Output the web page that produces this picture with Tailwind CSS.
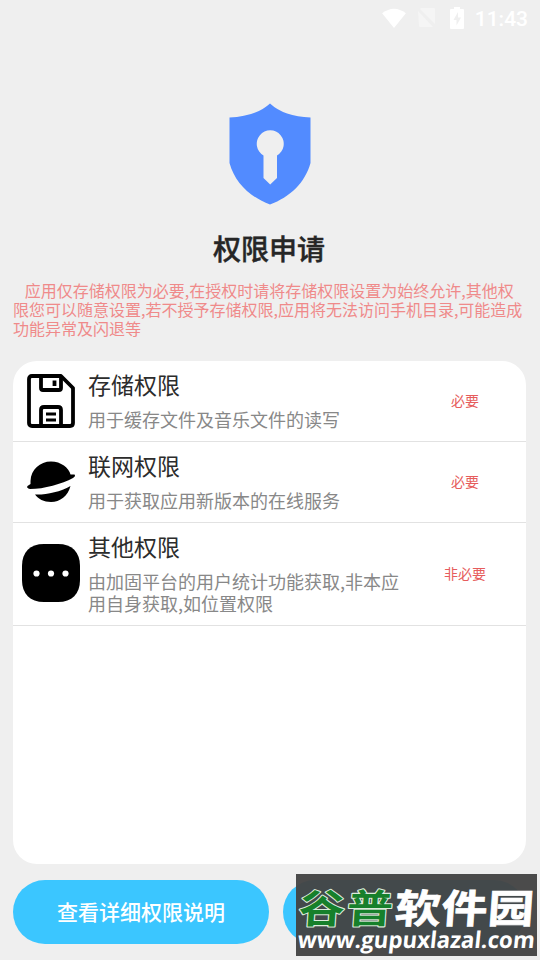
<!DOCTYPE html>
<html lang="zh-CN">
<head>
<meta charset="utf-8">
<title>权限申请</title>
<script src="https://cdn.jsdelivr.net/npm/@tailwindcss/browser@4"></script>
</head>
<body class="bg-[#efefef] font-['Noto_Sans_CJK_SC',sans-serif]">
<div class="relative w-[540px] h-[960px] overflow-hidden flex flex-col bg-[#efefef]">
  <header class="h-[35px] shrink-0 flex items-center justify-end pr-3 text-white">
    <svg class="w-[26px] h-5 mr-[11px]" viewBox="0 0 26 21"><path d="M0.500 5.500Q13-4 25.500 5.500L13 21Z" fill="currentColor"/></svg>
    <svg class="w-[18px] h-5 mr-3.5" viewBox="0 0 18 20"><path d="M3 0H16Q17 0 17 1V16L2 1Z M0 3L15 19H2Q1 19 1 18Z" fill="#f5f5f5"/></svg>
    <svg class="w-3.5 h-[22px] mr-[11px]" viewBox="0 0 14 22"><path d="M4 0H10V2H13Q14 2 14 3V21Q14 22 13 22H1Q0 22 0 21V3Q0 2 1 2H4Z" fill="currentColor"/><path d="M8 5L3.500 13H6.500V18.500L11 10.500H8Z" fill="#efefef"/></svg>
    <span class="font-[Roboto,sans-serif] font-medium text-[21px] leading-none pt-[3px]">11:43</span>
  </header>

  <section class="shrink-0 h-[326px] flex flex-col items-center pt-[68px]">
    <svg class="w-[82px] h-[102px]" viewBox="0 0 82 102"><path d="M41 0.500Q55 13.500 81.500 14.500V60C76 80 61 94 41 101.500C21 94 6 80 0.500 60V14.500Q27 13.500 41 0.500Z" fill="#528bff"/><path d="M34.500 52.500A13.500 13.500 0 1 1 48 52.500V75L41.200 81.500L34.500 75Z" fill="#efefef"/></svg>
    <h1 class="mt-[23px] mr-0.5 h-10 text-[28px] leading-10 font-medium [-webkit-text-stroke:0.4px] text-[#262626]">权限申请</h1>
    <p class="w-full mt-[13px] pl-[13px] text-base leading-[19px] text-[#ef8a8a] whitespace-pre"><span class="pl-px">   </span>应用仅存储权限为必要,在授权时请将存储权限设置为始终允许,其他权
限您可以随意设置,若不授予存储权限,应用将无法访问手机目录,可能造成
功能异常及闪退等</p>
  </section>

  <main class="shrink-0 mx-[13px] w-[513px] h-[503px] bg-white rounded-[24px] overflow-hidden">
    <article class="h-[81px] flex border-b border-[#e2e2e2]">
      <div class="w-[75px] pb-px flex items-center justify-center">
        <svg class="w-12 h-[54px]" viewBox="0 0 48 54" fill="none" stroke="#000" stroke-width="3.800" stroke-linejoin="round"><path d="M5 2H34L46 14V49Q46 52 43 52H5Q2 52 2 49V5Q2 2 5 2Z"/><path d="M14 2V14Q14 16 16 16H32Q34 16 34 14V2M14 52V36Q14 33 17 33H31Q34 33 34 36V52"/><path d="M19 40H29M19 46H29" stroke-width="3.200"/><path d="M27.500 6.500V12"/></svg>
      </div>
      <div class="w-[316px] pt-1.5">
        <h2 class="text-[23px] leading-[35px] text-[#2c2c2c]">存储权限</h2>
        <p class="mt-1.5 text-lg leading-[22px] text-[#888]">用于缓存文件及音乐文件的读写</p>
      </div>
      <div class="flex-1 pb-0.5 flex items-center justify-center text-sm text-[#e65c5c]">必要</div>
    </article>
    <article class="h-[81px] flex border-b border-[#e2e2e2]">
      <div class="w-[75px] pb-px flex items-center justify-center">
        <svg class="w-12 h-[42px] overflow-visible" viewBox="0 0 48 42"><path d="M3.500 20C4 8.500 13 0.500 24 0.500C34 0.500 42 7 43.500 13.500L47.500 13.500Q49 15 46 17C35 23 17 28 3 28Q-1 27 0.500 25L3.500 23Z M8 33.500C19 34 33 31 43.500 25C41 35 33 41 24 41C17 41 11 38 8 33.500Z"/></svg>
      </div>
      <div class="w-[316px] pt-1.5">
        <h2 class="text-[23px] leading-[35px] text-[#2c2c2c]">联网权限</h2>
        <p class="mt-1.5 text-lg leading-[22px] text-[#888]">用于获取应用新版本的在线服务</p>
      </div>
      <div class="flex-1 pb-0.5 flex items-center justify-center text-sm text-[#e65c5c]">必要</div>
    </article>
    <article class="h-[103px] flex border-b border-[#e2e2e2]">
      <div class="w-[75px] pb-0.5 flex items-center justify-center">
        <svg class="w-[58px] h-[58px]" viewBox="0 0 58 58"><path d="M22 0H36C50 0 58 8 58 22V36C58 50 50 58 36 58H22C8 58 0 50 0 36V22C0 8 8 0 22 0Z"/><g fill="#fff"><circle cx="14.500" cy="29.500" r="3.100"/><circle cx="29" cy="29.500" r="3.100"/><circle cx="43.500" cy="29.500" r="3.100"/></g></svg>
      </div>
      <div class="w-[316px] pt-1.5">
        <h2 class="text-[23px] leading-[35px] text-[#2c2c2c]">其他权限</h2>
        <p class="mt-1.5 text-lg leading-[22px] text-[#888]">由加固平台的用户统计功能获取,非本应<br>用自身获取,如位置权限</p>
      </div>
      <div class="flex-1 pb-0.5 flex items-center justify-center text-sm text-[#e65c5c]">非必要</div>
    </article>
  </main>

  <footer class="mt-4 mx-[13px] h-16 shrink-0 flex gap-3.5">
    <button class="w-64 h-16 rounded-full bg-[#3bc6ff] text-white text-[21px] font-medium">查看详细权限说明</button>
    <button class="w-[243px] h-16 rounded-full bg-[#3bc6ff]" aria-label="同意"></button>
  </footer>

  <div class="absolute left-[296px] top-[874px] w-[241px] h-[82px] bg-[#444444]/96">
    <svg class="w-full h-full" viewBox="0 0 241 82">
      <g font-family="Noto Sans CJK SC" font-weight="700" font-size="46" transform="translate(0 48.500) skewX(-4) scale(1 0.86)">
        <g fill="#16802b" stroke="#dcebdc" stroke-width="2.400" stroke-linejoin="round" paint-order="stroke"><text x="2" y="0" textLength="94">谷普</text></g>
        <text x="98" y="0" fill="#fff" stroke="#fff" stroke-width="0.800" textLength="139">软件园</text>
      </g>
      <text x="0" y="0" transform="translate(1 74) skewX(-6)" fill="#fff" font-family="Open Sans" font-weight="700" font-size="23" textLength="237" lengthAdjust="spacingAndGlyphs">www.gupuxlazal.com</text>
    </svg>
  </div>
</div>
</body>
</html>
